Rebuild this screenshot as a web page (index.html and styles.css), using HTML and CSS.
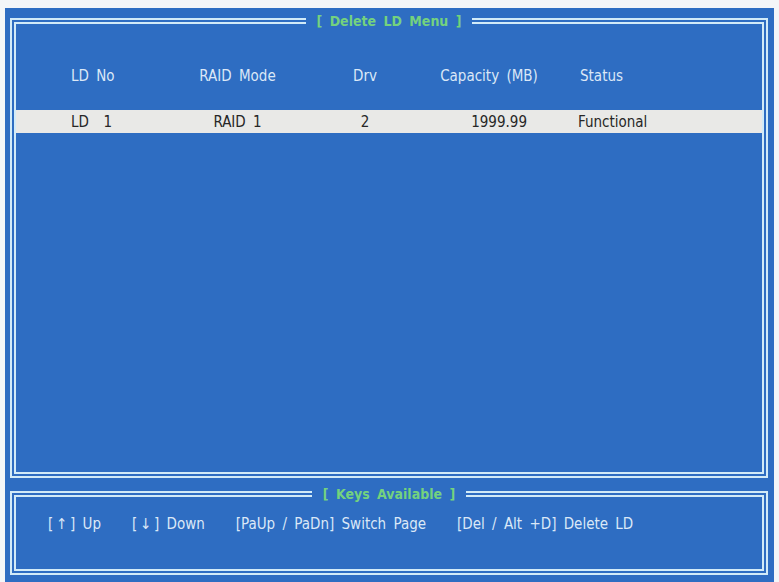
FILE: index.html
```html
<!DOCTYPE html>
<html lang="en">
<head>
  <meta charset="UTF-8">
  <title>Delete LD Menu</title>
  <link rel="stylesheet" href="styles.css">
</head>
<body>
  <div class="screen">
    <!-- main list -->
    <fieldset class="panel main-panel">
      <legend>[ Delete LD Menu ]</legend>
      <div class="ld-row ld-head">
        <span class="c-no">LD No</span>
        <span class="c-mode">RAID Mode</span>
        <span class="c-drv">Drv</span>
        <span class="c-cap">Capacity (MB)</span>
        <span class="c-status">Status</span>
      </div>
      <div class="ld-row ld-item">
        <span class="c-no">LD&nbsp;&nbsp;1</span>
        <span class="c-mode">RAID 1</span>
        <span class="c-drv">2</span>
        <span class="c-cap num">1999.99</span>
        <span class="c-status">Functional</span>
      </div>
    </fieldset>

    <!-- key help -->
    <fieldset class="panel keys-panel">
      <legend>[ Keys Available ]</legend>
      <div class="keys">
        <span>[&thinsp;↑&thinsp;] Up</span>
        <span>[&thinsp;↓&thinsp;] Down</span>
        <span>[PaUp / PaDn] Switch Page</span>
        <span>[Del / Alt +D] Delete LD</span>
      </div>
    </fieldset>
  </div>
</body>
</html>
```

FILE: styles.css
```css
* {
  box-sizing: border-box;
}
body {
  margin: 0;
  background: #f4f6f8;
  font-family: "DejaVu Sans Condensed", "DejaVu Sans", sans-serif;
}
.screen {
  margin: 8px 5px 0 5px;
  height: 574px;
  background-color: #2e6dc2;
  padding: 5px 6px 0 5px;
  display: flex;
  flex-direction: column;
  gap: 8px;
}
/* double line boxes */
.panel {
  margin: 0;
  padding: 0;
  min-width: 0;
  border: 6px double #d2ebf8;
}
.panel legend {
  margin: 0 auto;
  padding: 0 11px;
  font-size: 14px;
  font-weight: bold;
  line-height: 16px;
  color: #74d27e;
  word-spacing: 3px;
}
.main-panel {
  height: 465px;
}
.keys-panel {
  height: 89px;
}
/* table rows */
.ld-row {
  display: grid;
  grid-template-columns: 94px 145px 110px 138px 1fr;
  padding-left: 55px;
  height: 23px;
  align-items: center;
  font-size: 15px;
  word-spacing: 3px;
}
.ld-head {
  margin-top: 35px;
  color: #dbe8f7;
}
.ld-item {
  margin-top: 23px;
  background-color: #e9e9e7;
  color: #262626;
}
.c-mode, .c-drv, .c-cap {
  text-align: center;
}
.c-cap.num {
  text-align: right;
  padding-right: 31px;
}
.c-status {
  padding-left: 22px;
}
.ld-item .c-status {
  padding-left: 20px;
}
/* key help line */
.keys {
  display: flex;
  gap: 31px;
  padding: 13px 0 0 32px;
  font-size: 15px;
  color: #dbe8f7;
  word-spacing: 3px;
}
```
